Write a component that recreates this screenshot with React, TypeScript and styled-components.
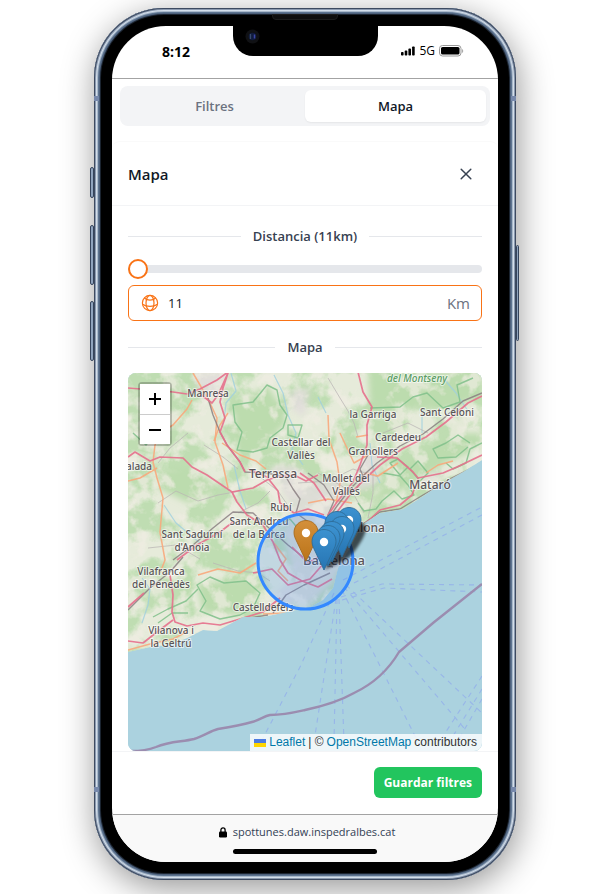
import React, { useState } from 'react';
import styled, { createGlobalStyle, css } from 'styled-components';

const GlobalStyle = createGlobalStyle`
  *, *::before, *::after { box-sizing: border-box; }
  body {
    margin: 0;
    background: #fff;
    color: #111827;
    font-family: 'Open Sans', 'Noto Sans', sans-serif;
  }
  button, input { font: inherit; }
`;

const Stage = styled.main`
  padding: 8px 73px 14px 94px;
  overflow: hidden;
`;

const Phone = styled.div`
  position: relative;
  padding: 18px;
  border-radius: 70px;
  background: #000;
  box-shadow:
    inset 0 0 0 1px #3d4a60,
    inset 0 0 0 2px #8b9ab0,
    inset 0 0 0 3px #d3deea,
    inset 0 0 0 4px #a9b8ca,
    inset 0 0 0 5px #5d7490,
    inset 0 0 0 6px #4d607b,
    inset 0 0 0 7px #1b2430,
    2px 8px 34px rgba(0, 0, 0, 0.42);
`;

const SideKey = styled.span<{ $side: 'left' | 'right'; $top: number; $height: number }>`
  position: absolute;
  top: ${(p) => p.$top}px;
  ${(p) => p.$side}: ${(p) => (p.$side === 'left' ? -4 : -3)}px;
  width: ${(p) => (p.$side === 'left' ? 4 : 3)}px;
  height: ${(p) => p.$height}px;
  border: 1px solid #35445c;
  border-radius: 2px;
  background: #8fa3bd;
`;

const Band = styled.span<{ $side: 'left' | 'right'; $end: 'top' | 'bottom' }>`
  position: absolute;
  ${(p) => p.$side}: 0;
  ${(p) => p.$end}: 88px;
  width: 5px;
  height: 5px;
  background: #7688ab;
`;

const Speaker = styled.span`
  position: absolute;
  top: 6px;
  left: calc(50% - 33px);
  width: 66px;
  height: 6px;
  border-radius: 0 0 4px 4px;
  border: 1px solid #1c1c1c;
  background: #0e0e0e;
`;

const Screen = styled.div`
  display: flex;
  flex-direction: column;
  border-radius: 54px;
  overflow: hidden;
  background: #fff;
`;

const StatusBar = styled.header`
  position: relative;
  display: flex;
  align-items: center;
  justify-content: space-between;
  height: 53px;
  padding: 0 34px 2px 50px;
  border-bottom: 1px solid #a3a3a3;
`;

const Clock = styled.time`
  font-size: 14px;
  font-weight: 700;
  color: #000;
`;

const Notch = styled.div`
  position: absolute;
  top: 0;
  left: calc(50% - 72px);
  width: 145px;
  height: 30px;
  border-radius: 0 0 20px 20px;
  background: #000;
`;

const Camera = styled.svg`
  position: absolute;
  top: 3px;
  left: 12px;
`;

const Signals = styled.div`
  display: flex;
  align-items: center;
  gap: 4px;
  font-size: 12px;
  font-weight: 500;
  line-height: 16px;
  color: #000;
`;

const Tabs = styled.nav`
  display: flex;
  margin: 7px 8px 15px;
  padding: 4px;
  border-radius: 8px;
  background: #f3f4f6;
`;

const Tab = styled.button<{ $active?: boolean }>`
  flex: 1;
  height: 32px;
  padding: 0;
  border: 0;
  border-radius: 6px;
  background: transparent;
  font-size: 13px;
  font-weight: 600;
  color: #6b7280;
  ${(p) =>
    p.$active &&
    css`
      background: #fff;
      color: #111827;
      box-shadow: 0 1px 2px rgba(0, 0, 0, 0.06);
    `}
`;

const Panel = styled.section`
  border-radius: 8px;
  border-top: 1px solid #fafafa;
`;

const PanelHeader = styled.div`
  display: flex;
  align-items: center;
  justify-content: space-between;
  height: 64px;
  padding: 0 20px 0 16px;
  border-bottom: 1px solid #f3f4f6;
`;

const Title = styled.h1`
  margin: 0;
  font-size: 15px;
  font-weight: 600;
  color: #111827;
`;

const CloseButton = styled.button`
  display: grid;
  place-items: center;
  width: 24px;
  height: 24px;
  padding: 0;
  border: 0;
  background: none;
  color: #374151;
`;

const PanelBody = styled.div`
  padding: 18px 16px 0;
`;

const Divider = styled.h2`
  display: flex;
  align-items: center;
  gap: 12px;
  margin: 0;
  font-size: 13px;
  line-height: 24px;
  font-weight: 600;
  color: #374151;

  &::before,
  &::after {
    content: '';
    flex: 1;
    height: 1px;
    background: #e5e7eb;
  }
`;

const Range = styled.input`
  display: block;
  appearance: none;
  width: 100%;
  height: 20px;
  margin: 11px 0 6px;
  background: transparent;

  &::-webkit-slider-runnable-track {
    height: 8px;
    border-radius: 4px;
    background: #e5e7eb;
  }
  &::-webkit-slider-thumb {
    appearance: none;
    width: 20px;
    height: 20px;
    margin-top: -6px;
    border: 2px solid #f97316;
    border-radius: 50%;
    background: #fff;
  }
`;

const Field = styled.label`
  display: flex;
  align-items: center;
  gap: 9px;
  height: 36px;
  margin-bottom: 14px;
  padding: 0 11px 0 12px;
  border: 1px solid #f97316;
  border-radius: 6px;
  color: #f97316;
`;

const FieldInput = styled.input`
  flex: 1;
  min-width: 0;
  padding: 0;
  border: 0;
  outline: 0;
  background: none;
  font-size: 13px;
  color: #111827;
`;

const Unit = styled.span`
  font-size: 15px;
  color: #6b7280;
`;

const MapFrame = styled.div`
  position: relative;
  margin-top: 14px;
  height: 378px;
  border-radius: 8px;
  overflow: hidden;
  background: #abd2df;
`;

const MapDrawing = styled.svg`
  display: block;
  width: 100%;
  height: 100%;
  font-family: 'Noto Sans', sans-serif;
`;

const ZoomControl = styled.div`
  position: absolute;
  top: 9px;
  left: 10px;
  border: 2px solid rgba(0, 0, 0, 0.22);
  border-radius: 4px;
  background-clip: padding-box;
`;

const ZoomButton = styled.button`
  display: grid;
  place-items: center;
  width: 30px;
  height: 30px;
  padding: 0;
  border: 0;
  background: #fff;

  & + & {
    border-top: 1px solid #ccc;
  }
`;

const Attribution = styled.div`
  position: absolute;
  right: 0;
  bottom: 0;
  display: flex;
  align-items: center;
  gap: 3px;
  padding: 0 5px 0 4px;
  background: rgba(255, 255, 255, 0.8);
  font-family: 'Liberation Sans', Arial, sans-serif;
  font-size: 12px;
  line-height: 17px;
  color: #333;
  white-space: nowrap;
`;

const MapLink = styled.a`
  color: #0078a8;
  text-decoration: none;
`;

const PanelFooter = styled.div`
  display: flex;
  justify-content: flex-end;
  padding: 15px 16px 16px;
  border-top: 1px solid #f3f4f6;
`;

const SaveButton = styled.button`
  height: 31px;
  padding: 0 10px;
  border: 0;
  border-radius: 6px;
  background: #22c55e;
  font-size: 12px;
  font-weight: 700;
  color: #fff;
`;

const BrowserBar = styled.footer`
  display: flex;
  flex-direction: column;
  align-items: center;
  gap: 8px;
  padding: 8px 0;
  border-top: 1px solid #a3a3a3;
  background: #f9f9f9;
`;

const Address = styled.div`
  display: flex;
  align-items: center;
  gap: 6px;
  padding-left: 4px;
  font-size: 11px;
  line-height: 18px;
  color: #334155;
`;

const HomeIndicator = styled.span`
  width: 144px;
  height: 5px;
  border-radius: 3px;
  background: #000;
`;

const SignalIcon = () => (
  <svg width="14" height="10" viewBox="0 0 14 10" aria-hidden="true">
    <rect x="0" y="6" width="2.6" height="3.5" rx=".8" />
    <rect x="3.7" y="4.6" width="2.6" height="4.9" rx=".8" />
    <rect x="7.4" y="2.6" width="2.6" height="6.9" rx=".8" />
    <rect x="11.1" y="0.5" width="2.6" height="9" rx=".8" />
  </svg>
);

const BatteryIcon = () => (
  <svg width="25" height="12" viewBox="0 0 25 12" aria-hidden="true">
    <rect x=".5" y=".5" width="21.5" height="10.5" rx="3" fill="none" stroke="#999" />
    <rect x="2" y="2" width="18.500" height="7.500" rx="1.600" />
    <path d="M23.200 4v4c1.300-.5 1.300-3.500 0-4Z" fill="#999" />
  </svg>
);

const CloseIcon = () => (
  <svg width="12" height="12" viewBox="0 0 12 12" aria-hidden="true">
    <path d="M1.200 1.200l9.600 9.600M10.800 1.200l-9.600 9.600" stroke="currentColor" strokeWidth="1.500" strokeLinecap="round" />
  </svg>
);

const GlobeIcon = () => (
  <svg width="18" height="18" viewBox="0 0 18 18" fill="none" stroke="currentColor" strokeWidth="1.200" aria-hidden="true">
    <circle cx="9" cy="9" r="7.600" />
    <ellipse cx="9" cy="9" rx="4" ry="7.600" />
    <path d="M3.300 4C6.500 6.800 11.500 6.800 14.700 4M1.500 10.200C5.500 13 12.500 13 16.500 10.200" />
  </svg>
);

const LockIcon = () => (
  <svg width="8" height="11" viewBox="0 0 8 11" aria-hidden="true">
    <rect x="0" y="4.500" width="8" height="6" rx="1.200" fill="#000" />
    <path d="M1.900 5V3a2.100 2.100 0 0 1 4.200 0v2" fill="none" stroke="#000" strokeWidth="1.300" />
  </svg>
);

const FlagIcon = () => (
  <svg width="12" height="8" viewBox="0 0 12 8" aria-hidden="true">
    <path fill="#4c7be1" d="M0 0h12v4H0z" />
    <path fill="#ffd500" d="M0 4h12v4H0z" />
  </svg>
);

const COAST =
  'M0 279 22 274 45 271 59 265 75 257 89 258 102 251 115 244 135 244 159 239 182 234 195 227 205 215 210 195 222 175 235 151 252 140 275 136 292 125 312 112 335 99 354 87V0H0Z';

type RoadKind = 'pink' | 'orange' | 'rail' | 'minor' | 'park' | 'river';

const roadStyle: Record<RoadKind, { stroke: string; width: number; opacity: number }> = {
  river: { stroke: '#9fcfdf', width: 1.2, opacity: 0.8 },
  minor: { stroke: '#b9b6b4', width: 1, opacity: 0.75 },
  park: { stroke: '#7fc089', width: 1.4, opacity: 0.85 },
  orange: { stroke: '#f8a87c', width: 1.5, opacity: 0.9 },
  rail: { stroke: '#85797d', width: 1.4, opacity: 0.8 },
  pink: { stroke: '#e6708c', width: 1.7, opacity: 0.9 },
};

const roads: [RoadKind, string][] = [
  ['river', 'M103 0 108 18 98 30 96 48M146 2 155 20 160 42 168 60 164 76 175 92M315 5 328 20 340 38M294 38 294 60M242 70 244 92 252 110M36 132 48 150 60 160 72 170M106 92 112 118 118 136M14 205 22 216 20 232 14 250M190 24 198 40'],
  ['minor', 'M30 130 48 118 70 128 90 122 112 118M76 72 95 84 110 96M110 140 130 130 142 118M200 5 212 25 220 38 226 50 230 64M85 190 110 198 130 200 142 208M190 100 212 112 225 120 236 140M245 95 245 120 240 145M255 60 280 50 300 60M122 96 150 118 165 140M60 60 42 75 30 90M170 110 200 108 225 96 250 104M20 175 48 172 72 186'],
  ['park', 'M105 32 125 29 139 12 149 17 152 32 159 42 155 55 142 65 139 75 125 79 109 77 114 59 107 49ZM160 52 174 52 170 65 160 62Z'],
  ['park', 'M242 35 272 34 285 24 299 20 315 35 332 29 329 12 345 5M342 70 330 62 318 70 305 76 310 85 328 84 340 74M354 70 342 76 338 90 325 96 318 90'],
  ['park', 'M255 100 272 103 280 112 286 122 274 126 266 118 254 128 248 136 236 138 230 130M290 88 300 100 292 108 282 96ZM262 90 270 86 280 94 272 102Z'],
  ['park', 'M69 212 82 204 96 210 118 208 132 220 125 235 112 242 92 246 72 238 78 228ZM25 244 40 236 58 228 70 216M30 250 44 240 60 240'],
  ['park', 'M150 152 162 146 172 158 184 166 196 168M5 60 18 72 28 60'],
  ['orange', 'M65 0 72 12 82 30 89 45 87 69 95 92 100 115M64 27 59 36 45 52 32 60 27 72 25 89 29 105 35 125 32 159 37 187 32 200M0 108 12 105 29 95'],
  ['orange', 'M94 70 112 82 128 88 138 96M200 42 201 66 209 89 212 110 208 130M70 202 90 196 112 200 128 190M0 277 22 271 45 266 60 258M240 62 228 64M232 105 238 100 250 103 270 90M298 100 310 92 325 88M135 241 160 240M146 170 158 186 150 198 160 208'],
  ['orange', 'M180 130 200 126 224 130M212 60 226 90 240 82M100 40 92 52 86 68'],
  ['rail', 'M80 25 85 42 92 59 99 72 112 89 117 99 139 100 158 104 165 116 172 126 168 140 182 150'],
  ['rail', 'M45 187 65 172 85 155 105 139 125 140 142 156 160 172 180 188 205 194M55 184 42 199 22 215 0 237'],
  ['rail', 'M354 20 335 28 315 46 295 61 272 73 249 90 239 99 222 116 209 133 196 152M354 90 322 106 295 122 272 136 252 139 235 151'],
  ['rail', 'M240 82 232 96 236 106 226 118M180 100 196 112 206 128 200 142M0 282 22 276 45 273 59 267 75 259 90 260 115 246 140 242M145 240 158 222 176 212 202 200'],
  ['pink', 'M0 15 25 17 45 19 59 21 72 16 89 7 100-1M72 21 84 30 90 22 100 0 95 15 92 29 97 45 92 59 99 72 112 89 117 99'],
  ['pink', 'M0 84 7 79 22 88 32 84 55 85 64 94 79 102 104 119 125 115 139 107 149 104 166 102 178 108 190 102'],
  ['pink', 'M104 119 109 129 119 142 135 152 145 169 152 187 160 200 174 208 190 214 204 206'],
  ['pink', 'M49 187 69 172 92 159 105 149M42 202 45 222 44 239 47 249 59 253 75 250 92 252 115 245 135 239 152 225M0 268 15 270 29 259 45 247M0 234 16 220'],
  ['pink', 'M230-1 235 19 244 34 239 52 239 72 232 92 225 109 209 129 200 142 206 160'],
  ['pink', 'M354 23 340 30 318 49 298 64 274 76 252 92 241 102 224 119 212 135 198 154'],
  ['pink', 'M249 84 269 85 285 99 290 105 315 100 329 94 354 82M290 106 284 122 272 132 252 137 238 150'],
  ['pink', 'M120 96 139 104 150 118 152 130 166 140 180 136 196 142M172 100 186 110 198 128M125 200 144 196 160 212 182 206 196 190M164 174 180 190 190 184'],
];

const ferries = [
  'M206 220 172 294 134 367',
  'M208 226 186 369',
  'M209 226 206 369',
  'M211 226 216 369',
  'M214 217 290 369',
  'M216 214 336 355',
  'M218 212 354 340',
  'M213 224 254 211 354 212',
  'M214 227 256 215 354 219',
  'M215 207 354 134',
  'M226 210 354 142',
  'M354 303 312 368',
  'M354 316 322 368',
  'M354 326 331 366',
];

type PlaceLabel = { x: number; y: number; text: string; size?: number; green?: boolean };

const places: PlaceLabel[] = [
  { x: 80, y: 24, text: 'Manresa' },
  { x: 289, y: 9, text: 'del Montseny', green: true },
  { x: 245, y: 45, text: 'la Garriga' },
  { x: 319, y: 43, text: 'Sant Celoni' },
  { x: 270, y: 68, text: 'Cardedeu' },
  { x: 245, y: 82, text: 'Granollers' },
  { x: 173, y: 73, text: 'Castellar del' },
  { x: 173, y: 86, text: 'Vallès' },
  { x: 145, y: 105, text: 'Terrassa', size: 12 },
  { x: 218, y: 109, text: 'Mollet del' },
  { x: 218, y: 122, text: 'Vallès' },
  { x: 302, y: 116, text: 'Mataró', size: 12 },
  { x: 11, y: 97, text: 'alada' },
  { x: 153, y: 138, text: 'Rubí' },
  { x: 131, y: 152, text: 'Sant Andreu' },
  { x: 131, y: 165, text: 'de la Barca' },
  { x: 64, y: 165, text: 'Sant Sadurní' },
  { x: 64, y: 178, text: "d'Anoia" },
  { x: 33, y: 202, text: 'Vilafranca' },
  { x: 33, y: 215, text: 'del Penedès' },
  { x: 135, y: 238, text: 'Castelldefels' },
  { x: 43, y: 261, text: 'Vilanova i' },
  { x: 43, y: 274, text: 'la Geltrú' },
  { x: 230, y: 159, text: 'Badalona', size: 12 },
  { x: 206, y: 192, text: 'Barcelona', size: 13 },
];

const Pin = ({ x, y, tone }: { x: number; y: number; tone: 'blue' | 'amber' }) => (
  <g transform={`translate(${x - 12.5} ${y - 41})`}>
    <path
      d="M12.500.5C5.800.5.500 5.800.500 12.500c0 3.400 1.300 6.200 3 9.500L12.500 41l9-19c1.700-3.300 3-6.100 3-9.500C24.500 5.800 19.200.5 12.500.5Z"
      fill={`url(#${tone})`}
      stroke={tone === 'blue' ? '#2e6c97' : '#a86a1c'}
      strokeWidth=".9"
    />
    <circle cx="12.500" cy="13" r="4.200" fill="#fff" />
  </g>
);

const CatalanMap = () => (
  <MapDrawing viewBox="0 0 354 378" preserveAspectRatio="xMidYMid slice" role="img" aria-label="Mapa de Barcelona">
    <defs>
      <linearGradient id="blue" x2="0" y2="1">
        <stop offset="0" stopColor="#3c92d0" />
        <stop offset="1" stopColor="#2674b2" />
      </linearGradient>
      <linearGradient id="amber" x2="0" y2="1">
        <stop offset="0" stopColor="#d4903b" />
        <stop offset="1" stopColor="#bb7419" />
      </linearGradient>
      <clipPath id="land">
        <path d={COAST} />
      </clipPath>
      <filter id="woods" x="0" y="0" width="100%" height="100%" colorInterpolationFilters="sRGB">
        <feTurbulence type="fractalNoise" baseFrequency=".03" numOctaves="5" seed="8" />
        <feColorMatrix values="0 0 0 0 .72  0 0 0 0 .86  0 0 0 0 .67  6 0 0 0 -2.5" />
      </filter>
      <filter id="fields" x="0" y="0" width="100%" height="100%" colorInterpolationFilters="sRGB">
        <feTurbulence type="fractalNoise" baseFrequency=".05" numOctaves="4" seed="21" />
        <feColorMatrix values="0 0 0 0 .94  0 0 0 0 .93  0 0 0 0 .89  0 6 0 0 -3.1" />
      </filter>
      <filter id="soft">
        <feGaussianBlur stdDeviation="3" />
      </filter>
      <filter id="shade">
        <feGaussianBlur stdDeviation="1.800" />
      </filter>
    </defs>

    <rect width="354" height="378" fill="#abd2df" />
    <g clipPath="url(#land)">
      <rect width="354" height="290" fill="#e6ebda" />
      <rect width="354" height="290" filter="url(#woods)" opacity=".85" />
      <g fill="#bcdcae" filter="url(#soft)">
        <path d="M105 32 139 12 152 32 159 50 142 65 125 79 109 77ZM240 0H354V25L310 36 242 34ZM265 98 330 60 354 60V74L300 98 270 120 240 132ZM69 210 120 206 130 222 112 242 75 240ZM20 96 70 95 90 118 60 130 30 115ZM150 152 170 145 206 158 186 164 160 162Z" />
      </g>
      <g fill="#e0dcda" opacity=".85" filter="url(#soft)">
        <path d="M140 95 165 92 185 108 215 105 222 135 225 160 208 206 182 232 140 230 165 205 155 160 165 135ZM235 78 252 76 248 112 225 120ZM66 0 100 0 92 24 72 22ZM287 112 306 98 316 102ZM160 20 182 14 176 44 164 36Z" />
      </g>
      <rect width="354" height="290" filter="url(#fields)" opacity=".7" />
      {roads.map(([kind, d], i) => (
        <path
          key={i}
          d={d}
          fill="none"
          stroke={roadStyle[kind].stroke}
          strokeWidth={roadStyle[kind].width}
          opacity={roadStyle[kind].opacity}
          strokeLinejoin="round"
        />
      ))}
    </g>
    <g fill="none" stroke="#95b1ea" strokeWidth="1.100" strokeDasharray="5 5" opacity=".85">
      {ferries.map((d) => (
        <path key={d} d={d} />
      ))}
    </g>
    <path
      d="M3 378C12 378 20 377 28 374 42 368 54 369 66 366 76 363 82 358 90 356 103 354 114 352 124 349 132 347 136 343 142 342 156 342 164 340 177 337 196 333 212 328 226 320 245 311 261 296 271 279L305 250 354 211"
      fill="none"
      stroke="#9b8db0"
      strokeWidth="2.400"
    />
    <g textAnchor="middle" paintOrder="stroke" stroke="#fff" strokeOpacity=".6" strokeWidth="2" strokeLinejoin="round">
      {places.map((p) => (
        <text
          key={`${p.text}${p.y}`}
          x={p.x}
          y={p.y}
          fontSize={p.size ?? 10}
          fontWeight={500}
          fontStyle={p.green ? 'italic' : 'normal'}
          fill={p.green ? '#5c9d65' : '#5a5558'}
        >
          {p.text}
        </text>
      ))}
    </g>
    <circle cx="177.500" cy="188.500" r="47.500" fill="#38f" fillOpacity=".2" stroke="#38f" strokeWidth="3" />
    <path d="M197 197C205 178 220 150 232 150 244 150 236 166 225 180 217 190 204 192 197 197Z" opacity=".65" filter="url(#shade)" />
    <Pin x={178} y={188} tone="amber" />
    <Pin x={221} y={175} tone="blue" />
    <Pin x={209} y={179} tone="blue" />
    <Pin x={214} y={184} tone="blue" />
    <Pin x={204} y={189} tone="blue" />
    <Pin x={200} y={193} tone="blue" />
    <Pin x={196} y={197} tone="blue" />
  </MapDrawing>
);

export default function App() {
  const [distance, setDistance] = useState(11);
  const [tab, setTab] = useState('Mapa');
  const update = (e: React.ChangeEvent<HTMLInputElement>) => setDistance(Number(e.target.value));

  return (
    <>
      <GlobalStyle />
      <Stage>
        <Phone>
          <SideKey $side="left" $top={159} $height={31} />
          <SideKey $side="left" $top={217} $height={60} />
          <SideKey $side="left" $top={293} $height={60} />
          <SideKey $side="right" $top={237} $height={96} />
          <Band $side="left" $end="top" />
          <Band $side="right" $end="top" />
          <Band $side="left" $end="bottom" />
          <Band $side="right" $end="bottom" />
          <Speaker />
          <Screen>
            <StatusBar>
              <Clock>8:12</Clock>
              <Notch>
                <Camera width="15" height="15" viewBox="0 0 15 15" aria-hidden="true">
                  <circle cx="7.500" cy="7.500" r="7" fill="#101114" />
                  <circle cx="7.500" cy="7.500" r="3.800" fill="#101b3c" />
                  <path d="M5.500 5v5" stroke="#394b68" strokeWidth="1.300" />
                  <path d="M9.500 5.500v4" stroke="#3b45a5" strokeWidth="1.500" />
                </Camera>
              </Notch>
              <Signals>
                <SignalIcon />
                <span>5G</span>
                <BatteryIcon />
              </Signals>
            </StatusBar>

            <Tabs aria-label="Vistes">
              {['Filtres', 'Mapa'].map((name) => (
                <Tab key={name} type="button" $active={tab === name} aria-pressed={tab === name} onClick={() => setTab(name)}>
                  {name}
                </Tab>
              ))}
            </Tabs>

            <Panel>
              <PanelHeader>
                <Title>Mapa</Title>
                <CloseButton type="button" aria-label="Tancar">
                  <CloseIcon />
                </CloseButton>
              </PanelHeader>
              <PanelBody>
                <Divider id="distance-title">Distancia ({distance}km)</Divider>
                <Range type="range" min={11} max={200} value={distance} onChange={update} aria-labelledby="distance-title" />
                <Field htmlFor="distance">
                  <GlobeIcon />
                  <FieldInput id="distance" inputMode="numeric" value={distance} onChange={update} />
                  <Unit>Km</Unit>
                </Field>
                <Divider>Mapa</Divider>
                <MapFrame>
                  <CatalanMap />
                  <ZoomControl>
                    <ZoomButton type="button" aria-label="Apropa">
                      <svg width="12" height="12" aria-hidden="true">
                        <path d="M0 6h12M6 0v12" stroke="#000" strokeWidth="2" />
                      </svg>
                    </ZoomButton>
                    <ZoomButton type="button" aria-label="Allunya">
                      <svg width="12" height="12" aria-hidden="true">
                        <path d="M0 6h12" stroke="#000" strokeWidth="2" />
                      </svg>
                    </ZoomButton>
                  </ZoomControl>
                  <Attribution>
                    <FlagIcon />
                    <MapLink href="https://leafletjs.com">Leaflet</MapLink>
                    <span>| ©</span>
                    <MapLink href="https://www.openstreetmap.org/copyright">OpenStreetMap</MapLink>
                    <span>contributors</span>
                  </Attribution>
                </MapFrame>
              </PanelBody>
              <PanelFooter>
                <SaveButton type="button">Guardar filtres</SaveButton>
              </PanelFooter>
            </Panel>

            <BrowserBar>
              <Address>
                <LockIcon />
                <span>spottunes.daw.inspedralbes.cat</span>
              </Address>
              <HomeIndicator />
            </BrowserBar>
          </Screen>
        </Phone>
      </Stage>
    </>
  );
}
